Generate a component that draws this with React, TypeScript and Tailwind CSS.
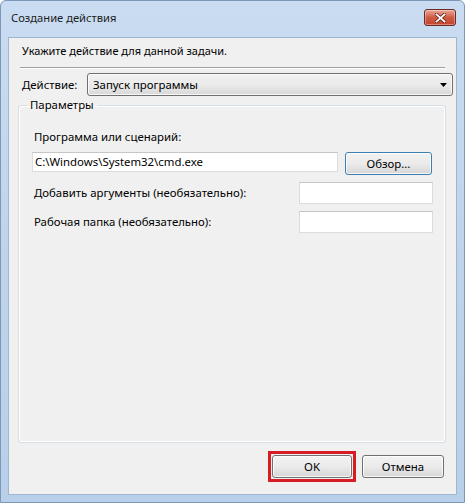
import React from "react";

function CloseButton() {
  return (
    <div className="w-[32px] h-[17px] rounded-[3px] border border-[#6b2a22] bg-gradient-to-b from-[#e8a898] via-[#cd5a43] to-[#c7442b] flex items-center justify-center shadow-[inset_0_0_0_1px_rgba(255,255,255,0.35)]">
      <svg width="11" height="10" viewBox="0 0 11 10">
        <path d="M1.5 1.5 L9.5 8.5 M9.5 1.5 L1.5 8.5" stroke="#5a1a12" strokeWidth="3.2" strokeLinecap="square" />
        <path d="M1.5 1.5 L9.5 8.5 M9.5 1.5 L1.5 8.5" stroke="#ffffff" strokeWidth="1.8" strokeLinecap="square" />
      </svg>
    </div>
  );
}

function WinButton({ label, width, focused }: { label: string; width: string; focused?: boolean }) {
  return (
    <div
      className={`${width} h-[23px] rounded-[3px] border flex items-center justify-center bg-gradient-to-b from-[#f2f2f2] via-[#ebebeb] to-[#d6d6d6] shadow-[inset_0_0_0_1px_rgba(255,255,255,0.8)] ${
        focused ? "border-[#3c7fb1] from-[#eaf6fd] via-[#d9f0fc] to-[#bee6fd]" : "border-[#707070]"
      }`}
    >
      {label}
    </div>
  );
}

export default function App() {
  return (
    <div className="w-[465px] h-[503px] flex flex-col bg-gradient-to-b from-[#c9dcf1] via-[#bfd4eb] to-[#b9d0ea] border border-[#7c97b8] rounded-t-[6px] font-['Segoe_UI','Noto_Sans',sans-serif] text-[11.4px] text-black leading-[16px]">
      <div className="h-[36px] flex items-start justify-between pl-[10px] pr-[8px]">
        <span className="mt-[9px] text-[11.2px] text-[#1e1e1e]">Создание действия</span>
        <div className="mt-[8px]">
          <CloseButton />
        </div>
      </div>

      <div className="flex-1 mx-[7px] mb-[7px] bg-[#f0f0f0] border border-[#9fb6cf] flex flex-col">
        <div className="pt-[5px] pl-[13px] text-[11px]">Укажите действие для данной задачи.</div>
        <div className="mt-[8px] ml-[11px] mr-[11px] border-t border-[#a0a0a0] border-b border-b-white" />

        <div className="mt-[4px] flex items-center pl-[13px] pr-[3px]">
          <span className="w-[65px]">Действие:</span>
          <div className="flex-1 h-[23px] rounded-[3px] border border-[#707070] bg-gradient-to-b from-[#f2f2f2] via-[#ebebeb] to-[#d8d8d8] shadow-[inset_0_0_0_1px_rgba(255,255,255,0.8)] flex items-center justify-between pl-[5px] pr-[5px]">
            <span>Запуск программы</span>
            <svg width="7" height="4" viewBox="0 0 7 4">
              <path d="M0 0 H7 L3.5 4 Z" fill="#000" />
            </svg>
          </div>
        </div>

        <fieldset className="flex-1 mt-[1px] ml-[9px] w-[428px] border border-[#d5dfe5] rounded-[3px] shadow-[inset_0_0_0_1px_#ffffff] px-0 flex flex-col">
          <legend className="ml-[8px] px-[3px] leading-[16px]">Параметры</legend>
          <div className="mt-[16px] pl-[15px]">Программа или сценарий:</div>
          <div className="mt-[7px] flex items-start pl-[13px]">
            <div className="w-[306px] h-[20px] bg-white border border-[#dcdcdc] border-t-[#c6c6c6] flex items-center pl-[2px]">
              C:\Windows\System32\cmd.exe
            </div>
            <div className="ml-[7px]">
              <WinButton label="Обзор..." width="w-[87px]" focused />
            </div>
          </div>
          <div className="mt-[7px] flex items-center pl-[15px] h-[22px]">
            <span className="w-[265px]">Добавить аргументы (необязательно):</span>
            <div className="w-[134px] h-[22px] bg-white border border-[#dcdcdc] border-t-[#c6c6c6]" />
          </div>
          <div className="mt-[7px] flex items-center pl-[15px] h-[22px]">
            <span className="w-[265px]">Рабочая папка (необязательно):</span>
            <div className="w-[134px] h-[22px] bg-white border border-[#dcdcdc] border-t-[#c6c6c6]" />
          </div>
        </fieldset>

        <div className="mt-[12px] mb-[16px] flex justify-end gap-[10px] pr-[12px]">
          <div className="outline-[3px] outline-solid outline-[#d81c24] outline-offset-[1px]">
            <WinButton label="OK" width="w-[80px]" />
          </div>
          <WinButton label="Отмена" width="w-[82px]" />
        </div>
      </div>
    </div>
  );
}
